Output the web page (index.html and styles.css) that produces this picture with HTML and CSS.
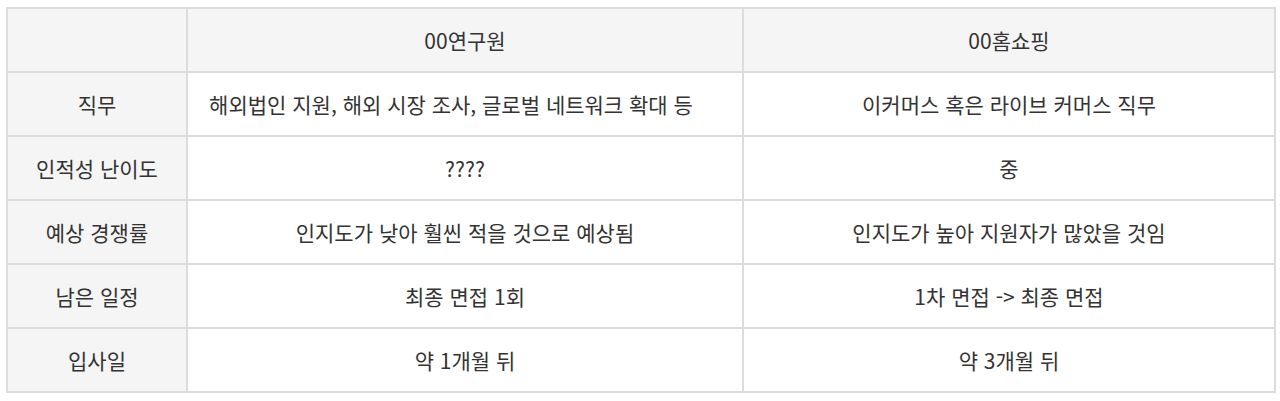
FILE: index.html
```html
<!DOCTYPE html>
<html lang="ko">
<head>
<meta charset="utf-8">
<link rel="stylesheet" href="styles.css">
</head>
<body>
<table class="cmp">
  <colgroup>
    <col class="c1"><col class="c2"><col class="c3">
  </colgroup>
  <thead>
    <tr><th class="lbl"></th><th>00연구원</th><th>00홈쇼핑</th></tr>
  </thead>
  <tbody>
    <tr><td class="lbl">직무</td><td class="shift">해외법인 지원, 해외 시장 조사, 글로벌 네트워크 확대 등</td><td>이커머스 혹은 라이브 커머스 직무</td></tr>
    <tr><td class="lbl">인적성 난이도</td><td>????</td><td>중</td></tr>
    <tr><td class="lbl">예상 경쟁률</td><td>인지도가 낮아 훨씬 적을 것으로 예상됨</td><td>인지도가 높아 지원자가 많았을 것임</td></tr>
    <tr><td class="lbl">남은 일정</td><td>최종 면접 1회</td><td>1차 면접 -&gt; 최종 면접</td></tr>
    <tr><td class="lbl">입사일</td><td>약 1개월 뒤</td><td>약 3개월 뒤</td></tr>
  </tbody>
</table>
</body>
</html>
```
FILE: styles.css
```css
html, body {
  margin: 0;
  padding: 0;
  background: #fff;
}
body {
  padding: 7px 0 0 6px;
  font-family: "Noto Sans CJK KR", "Noto Sans", sans-serif;
  color: #333;
}
.cmp {
  border-collapse: collapse;
  table-layout: fixed;
  width: 1268px;
  border: 2px solid #dcdcdc;
}
.c1 { width: 180px; }
.c2 { width: 556px; }
.c3 { width: 532px; }
.cmp th, .cmp td {
  border: 2px solid #dcdcdc;
  height: 64px;
  padding: 0 8px;
  box-sizing: border-box;
  text-align: center;
  vertical-align: middle;
  font-size: 21px;
  font-weight: 400;
  line-height: 28px;
}
.cmp td.shift {
  padding-right: 36px;
}
.cmp th {
  background: #f5f5f5;
}
.cmp td.lbl {
  background: #f5f5f5;
}
```
